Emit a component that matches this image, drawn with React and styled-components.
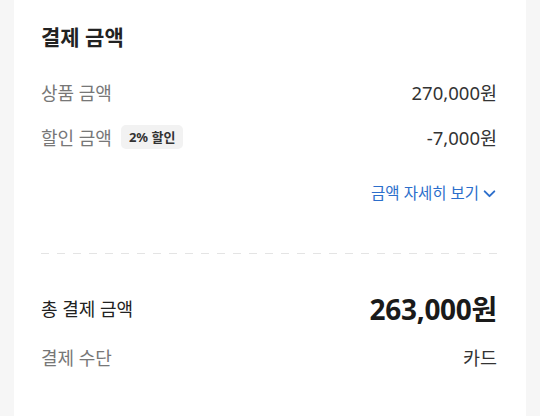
import React from 'react';
import styled, { createGlobalStyle } from 'styled-components';

const GlobalStyle = createGlobalStyle`
  html, body {
    margin: 0;
    padding: 0;
    background: #f6f6f6;
    font-family: "Noto Sans", "Noto Sans CJK KR", sans-serif;
  }
`;

const Page = styled.div`
  padding: 0 14px;
  height: 416px;
  box-sizing: border-box;
`;

const Card = styled.section`
  background: #ffffff;
  height: 100%;
  padding: 18px 29px 0 27px;
  box-sizing: border-box;
`;

const Title = styled.h2`
  margin: 0 0 13px;
  font-size: 21px;
  font-weight: 700;
  color: #222;
  line-height: 38px;
`;

const Row = styled.div`
  display: flex;
  justify-content: space-between;
  align-items: center;
  height: ${({ $h }) => $h || 45}px;
`;

const Label = styled.div`
  display: flex;
  align-items: center;
  gap: 9px;
  font-size: 18px;
  color: ${({ $strong }) => ($strong ? '#222' : '#777')};
`;

const Value = styled.div`
  font-size: ${({ $big }) => ($big ? 28 : 18.5)}px;
  font-weight: ${({ $big }) => ($big ? 700 : 400)};
  color: ${({ $big }) => ($big ? '#1a1a1a' : '#333')};
  letter-spacing: ${({ $big }) => ($big ? '-0.3px' : '0')};
`;

const Badge = styled.span`
  display: inline-flex;
  align-items: center;
  height: 24px;
  padding: 0 8px;
  border-radius: 5px;
  background: #f2f2f2;
  font-size: 13px;
  font-weight: 700;
  color: #333;
`;

const DetailLink = styled.button`
  display: flex;
  align-items: center;
  gap: 3px;
  margin: 24px 0 0 auto;
  padding: 0;
  border: none;
  background: none;
  font-family: inherit;
  font-size: 15.5px;
  line-height: 20px;
  color: #2c6ecb;
  cursor: pointer;
`;

const Dashed = styled.div`
  height: 1px;
  margin: 50px 0 28px;
  background: repeating-linear-gradient(
    to right,
    #e4e4e4 0 8px,
    transparent 8px 16px
  );
`;

const Chevron = () => (
  <svg width="15" height="15" viewBox="0 0 14 14" fill="none">
    <path d="M2.5 5l4.5 4.5L11.5 5" stroke="#2c6ecb" strokeWidth="1.8" strokeLinecap="round" strokeLinejoin="round" />
  </svg>
);

export default function App() {
  return (
    <>
      <GlobalStyle />
      <Page>
        <Card>
          <Title>결제 금액</Title>
          <Row>
            <Label>상품 금액</Label>
            <Value>270,000원</Value>
          </Row>
          <Row>
            <Label>
              할인 금액
              <Badge>2% 할인</Badge>
            </Label>
            <Value>-7,000원</Value>
          </Row>
          <DetailLink>
            금액 자세히 보기
            <Chevron />
          </DetailLink>
          <Dashed />
          <Row $h={51}>
            <Label $strong>총 결제 금액</Label>
            <Value $big>263,000원</Value>
          </Row>
          <Row $h={47}>
            <Label>결제 수단</Label>
            <Value>카드</Value>
          </Row>
        </Card>
      </Page>
    </>
  );
}
